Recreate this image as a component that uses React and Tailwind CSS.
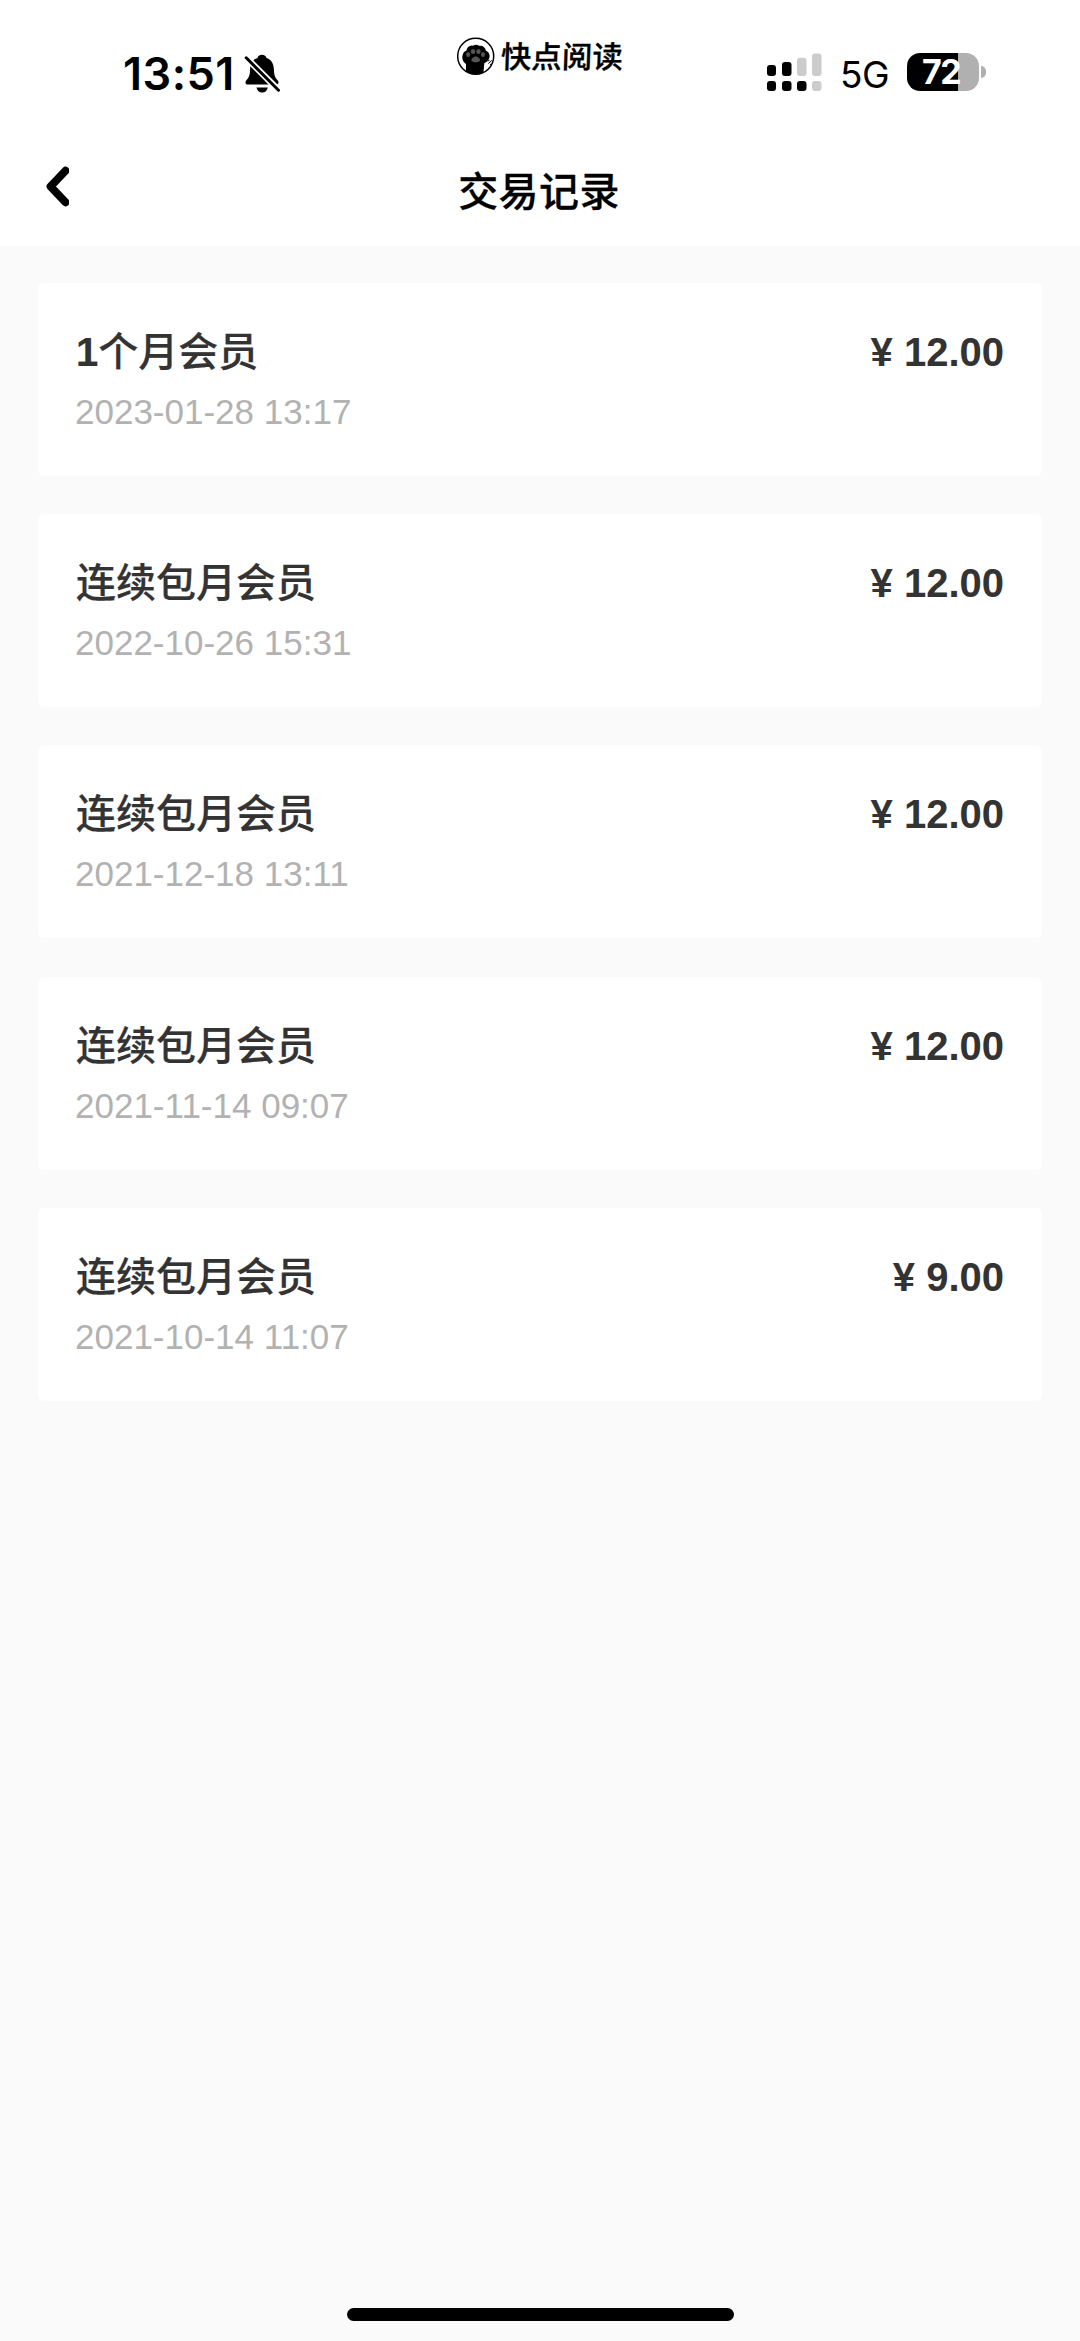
const records = [
  { title: '1个月会员', date: '2023-01-28 13:17', amount: '12.00' },
  { title: '连续包月会员', date: '2022-10-26 15:31', amount: '12.00' },
  { title: '连续包月会员', date: '2021-12-18 13:11', amount: '12.00' },
  { title: '连续包月会员', date: '2021-11-14 09:07', amount: '12.00' },
  { title: '连续包月会员', date: '2021-10-14 11:07', amount: '9.00' },
];

function MutedBell() {
  return (
    <svg className="mt-[53px] ml-[8px] h-10 w-[38px]" viewBox="0 0 38 40" fill="black">
      <path d="M19 1.8c-2.6 0-3.9 1.3-4.5 3.1C9.2 6.700 7.300 11 7.100 16.500c-.2 5.600-.9 7.600-3.900 11-1.400 1.700-.8 4 1.600 4h28.400c2.400 0 3-2.300 1.600-4-3-3.400-3.700-5.400-3.900-11C30.700 11 28.800 6.700 23.500 4.900 22.900 3.100 21.600 1.800 19 1.800Z" />
      <path d="M13.500 34.500h11.300c-.5 3-2.700 5-5.600 5s-5.200-2-5.700-5Z" />
      <path d="M3 4.500 36 37.500" stroke="white" strokeWidth="6.500" />
      <path d="M3.200 4.800 35.500 37.200" stroke="black" strokeWidth="3" strokeLinecap="round" />
    </svg>
  );
}

function PawLogo() {
  return (
    <svg className="mt-[37px] h-[39px] w-[39px] shrink-0" viewBox="0 0 39 39">
      <circle cx="18.700" cy="19.300" r="18" fill="white" stroke="black" strokeWidth="1.500" />
      <path d="M9 34.500V27C5.500 24.500 4.500 20.500 6 17c.6-1.700 1.800-2.800 3.300-3.200.6-3.600 3.500-6 6.700-5 2-1.300 4.300-1.200 6 0 3.400-.8 6.300 1.400 7 5 3 1.200 4.300 4.200 3.300 7.200-.7 2.200-2.500 4-5 5.200L26.500 35.500c-5 2.400-12.500 2-17.500-1Z" fill="black" />
      <g fill="#555">
        <ellipse cx="11.200" cy="17.500" rx="2" ry="2.500" />
        <ellipse cx="16" cy="14.500" rx="2.200" ry="2.600" />
        <ellipse cx="21.500" cy="14.500" rx="2.200" ry="2.600" />
        <ellipse cx="26" cy="17.500" rx="2" ry="2.500" />
        <path d="M18.700 19.500c2 0 4.300 2 4.300 3.600 0 2-2.600 2.200-4.300 2.200s-4.300-.2-4.300-2.200c0-1.600 2.300-3.600 4.300-3.600Z" />
      </g>
      <path d="m30.500 24 2-.8M31.300 26.500l3.500-3M33 27.500l1.800-.3" stroke="black" strokeWidth="1" fill="none" />
    </svg>
  );
}

function Signal() {
  return (
    <svg className="mt-[53px] h-[39px] w-[55px]" viewBox="0 0 55 39">
      <g fill="black">
        <rect x="0" y="12" width="9" height="11" rx="3" />
        <rect x="15" y="9" width="9.500" height="14" rx="3" />
        <rect x="0" y="28" width="9" height="10" rx="3" />
        <rect x="15" y="28" width="9.500" height="10" rx="3" />
        <rect x="30" y="28" width="9.500" height="10" rx="3" />
      </g>
      <g fill="#cccccc">
        <rect x="30" y="4.800" width="9.500" height="18.200" rx="3" />
        <rect x="45" y="0.500" width="9.500" height="22.500" rx="3" />
        <rect x="45" y="28" width="9.500" height="10" rx="3" />
      </g>
    </svg>
  );
}

function Battery() {
  return (
    <div className="mt-[53px] ml-[19px] flex h-[38px] items-center">
      <div className="flex h-[38px] w-[72px] items-center rounded-[13px] bg-[linear-gradient(90deg,#000_51px,#b0b0b0_51px)] pl-[15px] font-['Inter'] text-[34px] font-bold leading-[38px] tracking-[-1.500px] text-white">
        72
      </div>
      <div className="ml-[2px] h-3 w-[5px] rounded-r-full bg-[#b0b0b0]" />
    </div>
  );
}

function StatusBar() {
  return (
    <div className="flex h-[140px] items-start">
      <div className="flex w-[457px] items-start pl-[123px]">
        <span className="mt-[47px] w-[112px] whitespace-nowrap font-['Inter'] text-[45px] font-semibold leading-[54px] tracking-[0.500px]">13:51</span>
        <MutedBell />
      </div>
      <div className="flex w-[310px] items-start">
        <PawLogo />
        <span className="mt-[34px] ml-[5px] -skew-x-2 whitespace-nowrap font-['Noto_Sans_CJK_SC'] text-[30.500px] font-medium leading-[42px] [-webkit-text-stroke:0.300px_black]">快点阅读</span>
      </div>
      <Signal />
      <span className="mt-[50px] ml-[18px] w-[48px] whitespace-nowrap font-['Inter'] text-[37px] leading-[50px] tracking-[-0.500px]">5G</span>
      <Battery />
    </div>
  );
}

function NavBar() {
  return (
    <div className="grid h-[106px] grid-cols-[1fr_auto_1fr]">
      <button className="ml-[45px] mt-[26px] h-[41px] w-6" aria-label="返回">
        <svg className="h-[41px] w-6" viewBox="0 0 24 41" fill="none">
          <path d="M20.500 4.700 5.500 20.500 20.500 36.300" stroke="black" strokeWidth="7.800" strokeLinecap="round" strokeLinejoin="round" />
        </svg>
      </button>
      <h1 className="mt-[19px] mr-[2px] font-['Noto_Sans_CJK_SC'] text-[40px] font-medium leading-[60px] tracking-[0.400px] [-webkit-text-stroke:0.300px_black]">交易记录</h1>
    </div>
  );
}

function RecordCard({ title, date, amount }) {
  return (
    <li className="h-[193px] rounded-md bg-white px-[38px] pt-[39px]">
      <div className="flex justify-between font-['Liberation_Sans','Noto_Sans_CJK_SC',sans-serif] text-[40px] leading-[60px] text-[#333]">
        <span className="font-medium [-webkit-text-stroke:0.200px_#333]">
          {title.startsWith('1') ? <><b>1</b>{title.slice(1)}</> : title}
        </span>
        <span className="font-bold">¥ {amount}</span>
      </div>
      <p className="-ml-px font-['Liberation_Sans'] text-[35px] leading-[59px] text-[#b2b2b2]">{date}</p>
    </li>
  );
}

export default function App() {
  return (
    <div className="flex h-[2341px] w-[1080px] flex-col bg-[#fafafa] text-black">
      <header className="bg-white">
        <StatusBar />
        <NavBar />
      </header>
      <ul className="flex flex-1 flex-col gap-[38.200px] px-[38px] pt-[37px]">
        {records.map((r) => <RecordCard key={r.date} {...r} />)}
      </ul>
      <div className="mx-auto mb-[20px] h-[13px] w-[387px] rounded-full bg-black" />
    </div>
  );
}
